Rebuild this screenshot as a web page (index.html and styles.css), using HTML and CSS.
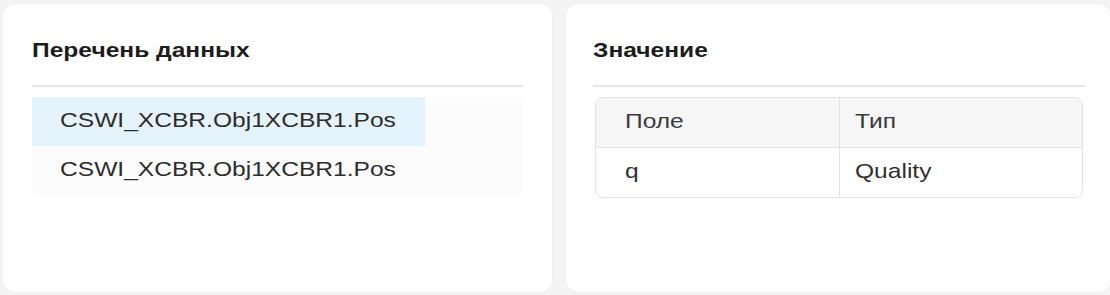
FILE: index.html
```html
<!DOCTYPE html>
<html lang="ru">
<head>
<meta charset="utf-8">
<title>Данные</title>
<link rel="stylesheet" href="styles.css">
</head>
<body>
<div class="page">
  <section class="card card-list">
    <h2 class="card-title"><span class="wide">Перечень данных</span></h2>
    <div class="divider"></div>
    <ul class="data-list">
      <li class="data-item is-active"><span class="wide">CSWI_XCBR.Obj1XCBR1.Pos</span></li>
      <li class="data-item"><span class="wide">CSWI_XCBR.Obj1XCBR1.Pos</span></li>
    </ul>
  </section>
  <section class="card card-value">
    <h2 class="card-title"><span class="wide">Значение</span></h2>
    <div class="divider"></div>
    <div class="table-wrap">
      <table class="value-table">
        <thead>
          <tr><th class="col-first"><span class="wide">Поле</span></th><th class="col-next"><span class="wide">Тип</span></th></tr>
        </thead>
        <tbody>
          <tr><td class="col-first"><span class="wide">q</span></td><td class="col-next"><span class="wide">Quality</span></td></tr>
        </tbody>
      </table>
    </div>
  </section>
</div>
</body>
</html>
```
FILE: styles.css
```css
* { box-sizing: border-box; }

html, body {
  margin: 0;
  padding: 0;
  background: #f4f4f4;
  font-family: "Liberation Sans", Arial, sans-serif;
  color: #333;
}

.page {
  display: grid;
  grid-template-columns: 549px 1fr;
  gap: 14px;
  height: 295px;
  padding: 4px 0 3px 3px;
}

.card {
  background: #fff;
  border-radius: 12px;
  box-shadow: 0 0 3px rgba(0, 0, 0, 0.04);
  padding: 34px 29px 0;
}

.card-value {
  padding: 34px 25px 0 27px;
}

.wide {
  display: inline-block;
  transform: scaleX(1.17);
  transform-origin: 0 50%;
  white-space: nowrap;
}

.card-title {
  margin: 0;
  font-size: 21px;
  line-height: 24px;
  font-weight: 700;
  color: #1c1c1c;
}

.divider {
  margin-top: 23px;
  border-top: 2px solid #e7e7e7;
}

.data-list {
  list-style: none;
  margin: 10px 0 0;
  padding: 0;
  height: 98px;
  background: #fcfcfc;
  border-radius: 8px;
}

.data-item {
  width: 393px;
  padding: 0 28px 3px;
  font-size: 21px;
  line-height: 46px;
  color: #2d2d2d;
}

.data-item.is-active {
  background: #e5f4fc;
}

.table-wrap {
  margin: 10px 2px 0;
  border: 1px solid #e2e2e2;
  border-radius: 8px;
  overflow: hidden;
}

.value-table {
  width: 100%;
  border-collapse: collapse;
  table-layout: fixed;
  font-size: 21px;
}

.value-table th,
.value-table td {
  text-align: left;
  font-weight: 400;
  line-height: 46px;
  padding: 0 0 3px;
  color: #2f2f2f;
}

.value-table th {
  background: #f6f6f6;
  border-bottom: 1px solid #e2e2e2;
  color: #3a3a3a;
}

.col-first { padding-left: 29px !important; }

.col-next {
  padding-left: 15px !important;
  border-left: 1px solid #e2e2e2;
}
```
